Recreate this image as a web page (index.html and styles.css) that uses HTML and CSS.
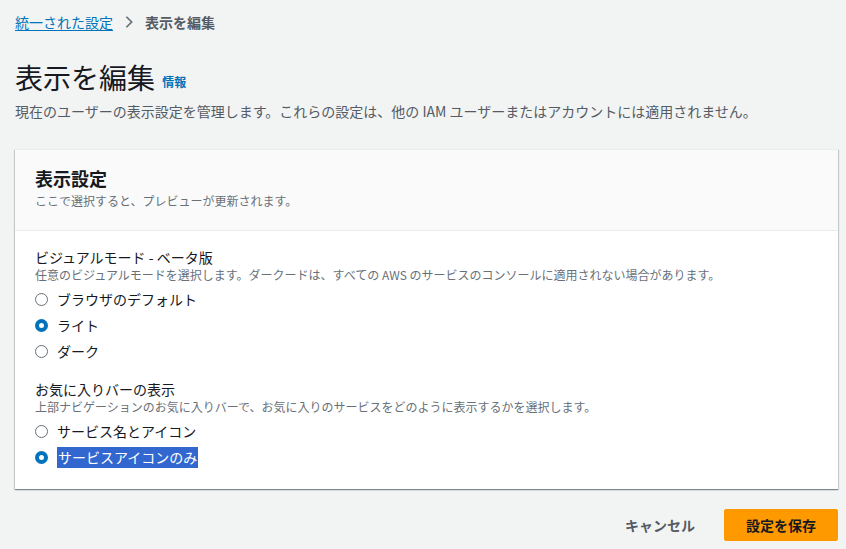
FILE: index.html
```html
<!DOCTYPE html>
<html lang="ja">
<head>
<meta charset="UTF-8" />
<meta name="viewport" content="width=device-width, initial-scale=1" />
<title>表示を編集</title>
<link rel="stylesheet" href="styles.css">
</head>
<body>
  <main class="page">
    <nav class="breadcrumb" aria-label="Breadcrumb">
      <a href="#" class="crumb-link">統一された設定</a>
      <svg class="crumb-sep" viewBox="0 0 16 16" aria-hidden="true">
        <polyline points="5 2 11 8 5 14"></polyline>
      </svg>
      <span class="crumb-current">表示を編集</span>
    </nav>

    <header class="page-header">
      <h1>表示を編集 <a href="#" class="info-link">情報</a></h1>
      <p class="page-desc">現在のユーザーの表示設定を管理します。これらの設定は、他の IAM ユーザーまたはアカウントには適用されません。</p>
    </header>

    <section class="card">
      <div class="card-header">
        <h2>表示設定</h2>
        <p>ここで選択すると、プレビューが更新されます。</p>
      </div>
      <div class="card-body">
        <fieldset class="field">
          <legend class="field-label">ビジュアルモード - ベータ版</legend>
          <p class="field-desc">任意のビジュアルモードを選択します。ダークードは、すべての AWS のサービスのコンソールに適用されない場合があります。</p>
          <label class="radio"><span class="dot"></span>ブラウザのデフォルト</label>
          <label class="radio"><span class="dot checked"></span>ライト</label>
          <label class="radio"><span class="dot"></span>ダーク</label>
        </fieldset>

        <fieldset class="field">
          <legend class="field-label">お気に入りバーの表示</legend>
          <p class="field-desc">上部ナビゲーションのお気に入りバーで、お気に入りのサービスをどのように表示するかを選択します。</p>
          <label class="radio"><span class="dot"></span>サービス名とアイコン</label>
          <label class="radio"><span class="dot checked"></span><span class="selected-text">サービスアイコンのみ</span></label>
        </fieldset>
      </div>
    </section>

    <div class="actions">
      <button type="button" class="btn-link">キャンセル</button>
      <button type="button" class="btn-primary">設定を保存</button>
    </div>
  </main>
</body>
</html>
```

FILE: styles.css
```css
/* Reset & base */
*, *::before, *::after {
  box-sizing: border-box;
}

body {
  margin: 0;
  font-family: "Noto Sans CJK JP", "Noto Sans", sans-serif;
  background: #f2f3f3;
  color: #16191f;
  font-size: 14px;
}

.page {
  padding: 12px 8px 0 15px;
}

/* Breadcrumb */
.breadcrumb {
  display: flex;
  align-items: center;
  height: 20px;
  font-size: 14px;
  line-height: 20px;
}

.crumb-link {
  color: #0073bb;
  text-decoration: underline;
  text-underline-offset: 2px;
}

.crumb-sep {
  width: 14px;
  height: 14px;
  margin: 0 9px 0 9px;
  fill: none;
  stroke: #687078;
  stroke-width: 2;
  stroke-linejoin: miter;
}

.crumb-current {
  color: #545b64;
  font-weight: 700;
}

/* Page header */
.page-header {
  margin-top: 27px;
}

h1 {
  margin: 0;
  font-size: 28px;
  font-weight: 400;
  line-height: 36px;
  color: #16191f;
}

.info-link {
  font-size: 12px;
  font-weight: 700;
  color: #0073bb;
  text-decoration: none;
  margin-left: 1px;
  vertical-align: 2px;
}

.page-desc {
  margin: 1px 0 0;
  line-height: 20px;
  color: #545b64;
}

/* Card */
.card {
  margin-top: 28px;
  background: #fff;
  box-shadow: 0 1px 1px 0 rgb(0 28 36 / 0.3), 1px 1px 1px 0 rgb(0 28 36 / 0.15), -1px 1px 1px 0 rgb(0 28 36 / 0.15);
  border-top: 1px solid #eaeded;
}

.card-header {
  background: #fafafa;
  border-bottom: 1px solid #eaeded;
  padding: 16px 20px 21px;
}

.card-header h2 {
  margin: 0;
  font-size: 18px;
  font-weight: 700;
  line-height: 24px;
}

.card-header p {
  margin: 3px 0 0;
  font-size: 12px;
  line-height: 16px;
  color: #687078;
}

.card-body {
  padding: 16px 20px 19px;
  display: flex;
  flex-direction: column;
  gap: 15px;
}

.field {
  border: 0;
  margin: 0;
  padding: 0;
  min-width: 0;
}

.field-label {
  padding: 0;
  font-size: 14px;
  line-height: 20px;
  color: #16191f;
}

.field-desc {
  margin: 0 0 3px;
  font-size: 12px;
  line-height: 16px;
  color: #687078;
}

.radio {
  display: flex;
  align-items: center;
  height: 26px;
  line-height: 20px;
  color: #16191f;
}

.dot {
  width: 13px;
  height: 13px;
  border: 1.3px solid #687078;
  border-radius: 50%;
  margin-right: 9px;
  flex: none;
  background: #fff;
}

.dot.checked {
  border: 4px solid #0073bb;
}

.selected-text {
  background: #3367d0;
  color: #fff;
  padding: 0 1px;
  line-height: 21px;
}

/* Actions */
.actions {
  display: flex;
  justify-content: flex-end;
  align-items: center;
  gap: 9px;
  margin-top: 20px;
}

.btn-link,
.btn-primary {
  font-family: inherit;
  font-size: 14px;
  font-weight: 700;
  height: 32px;
  line-height: 20px;
  border-radius: 2px;
  cursor: pointer;
}

.btn-link {
  background: none;
  border: 0;
  color: #545b64;
  padding: 0 20px;
}

.btn-primary {
  background: #ff9900;
  border: 1px solid #ff9900;
  color: #16191f;
  padding: 0 21px;
}
```
